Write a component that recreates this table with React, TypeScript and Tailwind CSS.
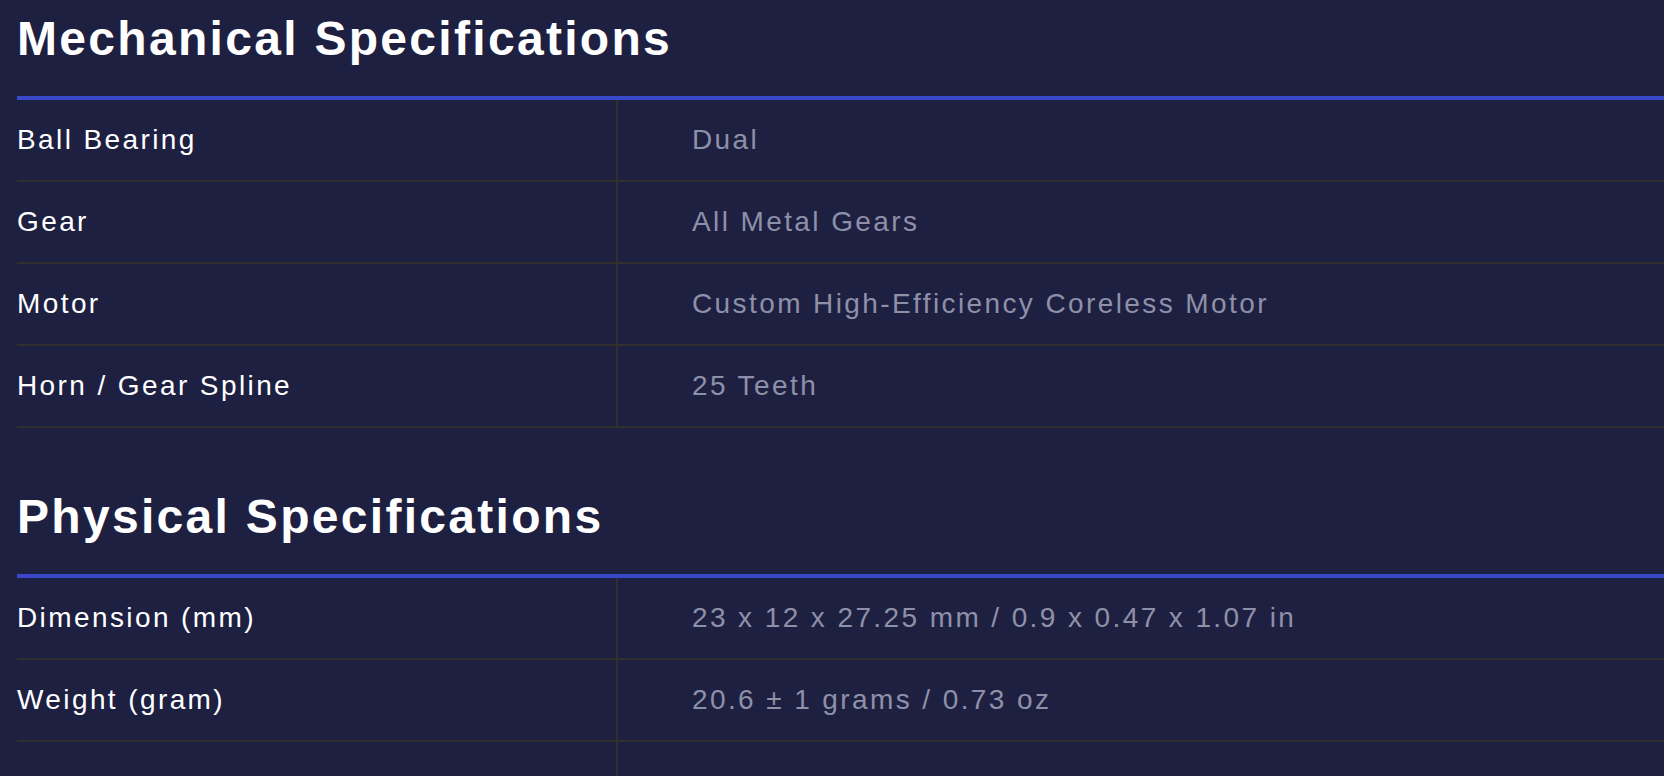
import React from "react";

// Spec tables
const SECTIONS = [
    {
        title: "Mechanical Specifications",
        rows: [
            { label: "Ball Bearing", value: "Dual" },
            { label: "Gear", value: "All Metal Gears" },
            { label: "Motor", value: "Custom High-Efficiency Coreless Motor" },
            { label: "Horn / Gear Spline", value: "25 Teeth" },
        ],
    },
    {
        title: "Physical Specifications",
        rows: [
            { label: "Dimension (mm)", value: "23 x 12 x 27.25 mm / 0.9 x 0.47 x 1.07 in" },
            { label: "Weight (gram)", value: "20.6 ± 1 grams / 0.73 oz" },
            { label: "", value: "" },
        ],
    },
];

function SpecRow({ label, value }: { label: string; value: string }) {
    return (
        <div className="flex border-b-2 border-[#302f2b]">
            <div className="flex h-[80px] w-[601px] shrink-0 items-center border-r-2 border-[#302f2b] text-white">
                {label}
            </div>
            <div className="flex h-[80px] flex-1 items-center pl-[74px] text-[#8e90a8]">
                {value}
            </div>
        </div>
    );
}

export default function App() {
    return (
        <div
            className="h-screen overflow-hidden bg-[#1e2042] pl-[17px]"
            style={{ fontFamily: '"Liberation Sans", Arial, sans-serif' }}
        >
            {SECTIONS.map((section, i) => (
                <section key={section.title} className={i > 0 ? "mt-[50px] pt-[11px]" : "pt-[11px]"}>
                    <h2 className="text-[48px] font-bold leading-[56px] tracking-[2.3px] text-white">
                        {section.title}
                    </h2>
                    <div className="mt-[29px] border-t-4 border-[#3848c8] text-[28px] tracking-[2.4px]">
                        {section.rows.map((row, j) => (
                            <SpecRow key={j} label={row.label} value={row.value} />
                        ))}
                    </div>
                </section>
            ))}
        </div>
    );
}
